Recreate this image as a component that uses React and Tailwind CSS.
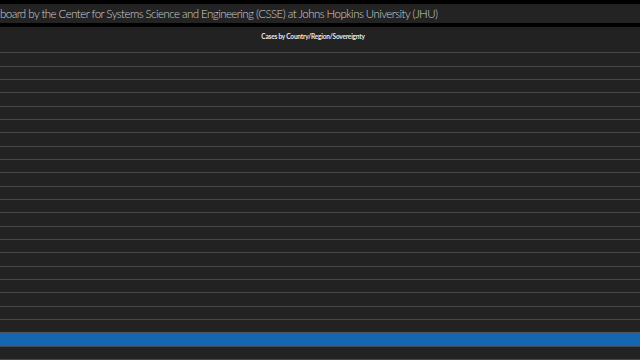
import React from 'react'

const rows = Array.from({ length: 25 }, (_, i) => i)

export default function App() {
  return (
    <div className="flex h-[360px] w-[640px] flex-col overflow-hidden bg-black" style={{ fontFamily: 'Lato, "Open Sans", sans-serif' }}>
      <div className="mt-[4px] flex h-[19px] shrink-0 items-center overflow-hidden bg-[#232323]">
        <span className="whitespace-nowrap text-[11.5px] font-light leading-none tracking-[-0.55px] text-[#d0d0d0]">
          board by the Center for Systems Science and Engineering (CSSE) at Johns Hopkins University (JHU)
        </span>
      </div>
      <div className="mt-[4px] flex min-h-0 flex-1 flex-col bg-[#222222]">
        <div className="flex h-[13px] shrink-0 items-end justify-center pr-[14px]">
          <span className="text-[6.5px] font-bold leading-none tracking-[-0.2px] text-[#e8e8e8]">Cases by Country/Region/Sovereignty</span>
        </div>
        <ul className="min-h-0 flex-1 overflow-hidden">
          {rows.map((i) => (
            <li
              key={i}
              className={
                i === 22
                  ? 'h-[13.333px] border-b border-[#3f4a55] bg-[#1565b0]'
                  : i === 21
                    ? 'h-[13.333px] border-b border-[#4a5660] bg-[#232221]'
                    : 'h-[13.333px] border-b border-[#474747]'
              }
            />
          ))}
        </ul>
      </div>
    </div>
  )
}
